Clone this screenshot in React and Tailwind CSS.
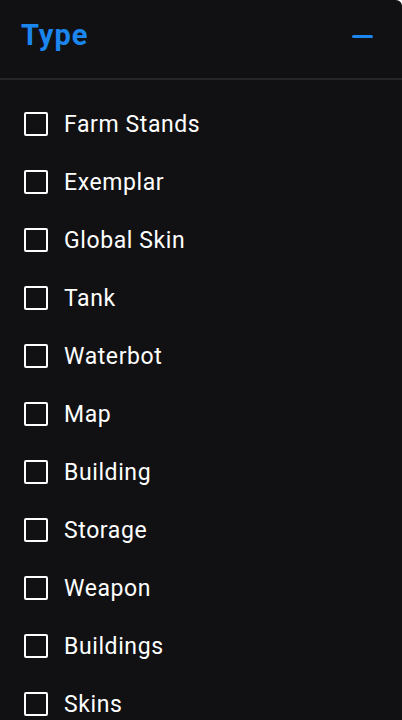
import React, { useState } from "react";

const types = [
  "Farm Stands",
  "Exemplar",
  "Global Skin",
  "Tank",
  "Waterbot",
  "Map",
  "Building",
  "Storage",
  "Weapon",
  "Buildings",
  "Skins",
];

const App = () => {
  const [checked, setChecked] = useState({});

  return (
    <div className="h-[720px] w-[402px] overflow-hidden bg-white">
      <div
        className="h-full w-full bg-[#111113] rounded-tr-[6px] text-white"
        style={{ fontFamily: "Roboto, 'Liberation Sans', sans-serif" }}
      >
        {/* Header */}
        <div className="h-[80px] flex items-center justify-between pl-[21px] pr-[29px] border-b-2 border-[#27272a]">
          <h2 className="text-[29px] font-bold text-[#1b86ee] leading-none tracking-[1px] -mt-[8px]">Type</h2>
          <div className="w-[21px] h-[3px] bg-[#1b86ee] rounded-sm -mt-[6px]" />
        </div>

        {/* Options */}
        <ul className="pt-[15px]">
          {types.map((t) => (
            <li
              key={t}
              className="h-[58px] flex items-center pl-6 cursor-pointer"
              onClick={() => setChecked((p) => ({ ...p, [t]: !p[t] }))}
            >
              <span
                className={`w-[24px] h-[24px] border-2 border-white rounded-[2px] ${
                  checked[t] ? "bg-[#1b86ee]" : ""
                }`}
              />
              <span className="ml-4 text-[23px] font-normal leading-none tracking-[0.6px]">{t}</span>
            </li>
          ))}
        </ul>
      </div>
    </div>
  );
};

export default App;
